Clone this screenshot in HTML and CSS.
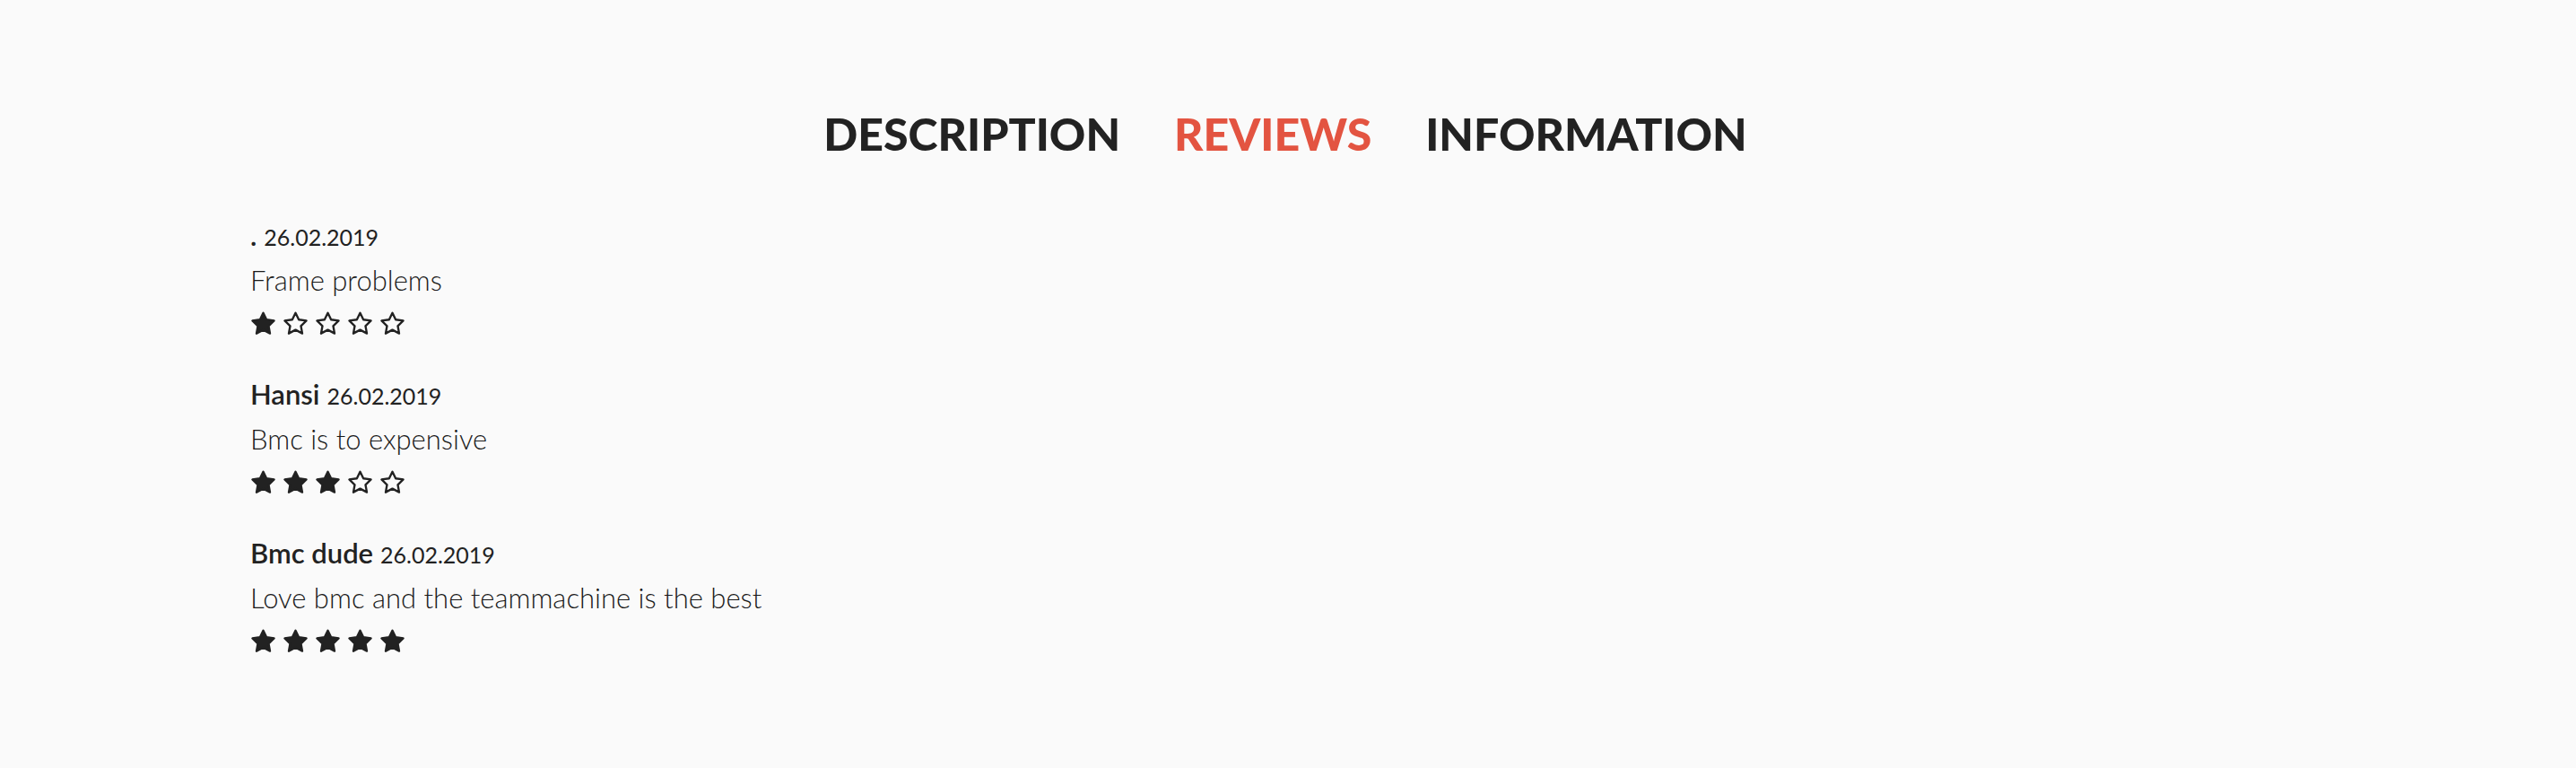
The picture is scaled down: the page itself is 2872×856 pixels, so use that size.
FILE: index.html
```html
<!DOCTYPE html>
<html lang="en">
<head>
    <meta charset="UTF-8">
    <meta name="viewport" content="width=device-width, initial-scale=1">
    <title>Reviews</title>
    <link rel="stylesheet" href="styles.css">
</head>
<body>
    <svg class="defs" width="0" height="0">
        <symbol id="star" viewBox="0 0 24 23">
            <polygon points="12,1.5 15.1,7.9 22.3,8.9 17.1,13.9 18.4,21 12,17.6 5.6,21 6.9,13.9 1.7,8.9 8.9,7.9"/>
        </symbol>
    </svg>

    <div class="tabs">
        <a class="tab">DESCRIPTION</a>
        <a class="tab active">REVIEWS</a>
        <a class="tab">INFORMATION</a>
    </div>

    <div class="reviews">
        <div class="review">
            <div class="review-head"><span class="author">.</span> <span class="date">26.02.2019</span></div>
            <p class="review-text">Frame problems</p>
            <div class="rating">
                <svg class="star full"><use href="#star"/></svg>
                <svg class="star"><use href="#star"/></svg>
                <svg class="star"><use href="#star"/></svg>
                <svg class="star"><use href="#star"/></svg>
                <svg class="star"><use href="#star"/></svg>
            </div>
        </div>
        <div class="review">
            <div class="review-head"><span class="author">Hansi</span> <span class="date">26.02.2019</span></div>
            <p class="review-text">Bmc is to expensive</p>
            <div class="rating">
                <svg class="star full"><use href="#star"/></svg>
                <svg class="star full"><use href="#star"/></svg>
                <svg class="star full"><use href="#star"/></svg>
                <svg class="star"><use href="#star"/></svg>
                <svg class="star"><use href="#star"/></svg>
            </div>
        </div>
        <div class="review">
            <div class="review-head"><span class="author">Bmc dude</span> <span class="date">26.02.2019</span></div>
            <p class="review-text">Love bmc and the teammachine is the best</p>
            <div class="rating">
                <svg class="star full"><use href="#star"/></svg>
                <svg class="star full"><use href="#star"/></svg>
                <svg class="star full"><use href="#star"/></svg>
                <svg class="star full"><use href="#star"/></svg>
                <svg class="star full"><use href="#star"/></svg>
            </div>
        </div>
    </div>
</body>
</html>
```

FILE: styles.css
```css
*{
    font-family: Lato, 'Open Sans', sans-serif;
    margin: 0;
    padding: 0;
}
body {
    background-color: #fafafa;
    color: #222;
}
.defs {
    position: absolute;
}
.tabs {
    display: flex;
    justify-content: center;
    gap: 60px;
    padding-top: 119px;
    padding-right: 6px;
}
.tab {
    font-size: 50px;
    line-height: 60px;
    font-weight: 900;
    color: #222;
    cursor: pointer;
}
.tab.active {
    color: #e35441;
}
.reviews {
    display: flex;
    flex-direction: column;
    gap: 46px;
    padding: 64px 279px 0;
}
.review-head {
    font-size: 31px;
    line-height: 38px;
}
.author {
    font-weight: 600;
}
.date {
    font-size: 25px;
    font-weight: 400;
}
.review-text {
    margin-top: 14px;
    font-size: 31px;
    line-height: 31px;
    font-weight: 300;
    color: #1a1a1a;
}
.rating {
    display: flex;
    gap: 7px;
    margin-top: 19px;
}
.star {
    width: 29px;
    height: 27px;
    fill: none;
    stroke: #222;
    stroke-width: 2;
    stroke-linejoin: round;
}
.star.full {
    fill: #222;
}
```
